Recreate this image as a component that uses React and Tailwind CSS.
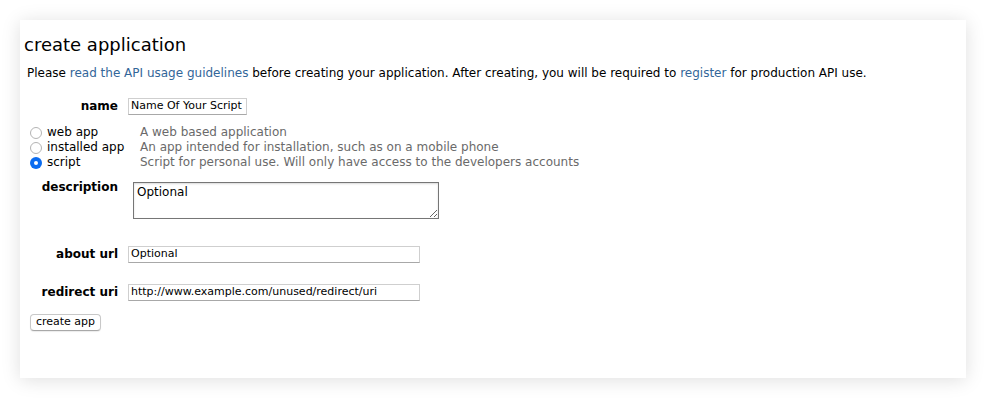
export default function App() {
  const font = { fontFamily: '"DejaVu Sans", Verdana, sans-serif' };
  const Radio = ({ checked }) =>
    checked ? (
      <span className="inline-flex h-[12px] w-[12px] items-center justify-center rounded-full bg-[#0b6cf0]">
        <span className="h-[4px] w-[4px] rounded-full bg-white" />
      </span>
    ) : (
      <span className="inline-block h-[12px] w-[12px] rounded-full border border-[#b4b4b4] bg-white" />
    );
  return (
    <div className="h-[398px] w-[986px] bg-white pt-[20px] pl-[20px]" style={font}>
      <div className="h-[358px] w-[946px] bg-white shadow-[0_2px_18px_rgba(0,0,0,0.13)] pl-[4px] pt-[13px] text-black">
        <h2 className="text-[18px] leading-[24px]">create application</h2>
        <p className="mt-[8px] pl-[3px] text-[12px] leading-[16px]">
          Please <span className="text-[#336699]">read the API usage guidelines</span> before creating your application. After creating, you will be required to <span className="text-[#336699]">register</span> for production API use.
        </p>
        <div className="mt-[16px] flex items-center text-[12px]">
          <div className="w-[94px] text-right font-bold">name</div>
          <div className="ml-[10px] flex h-[17px] w-[119px] items-center border border-[#cfcfcf] border-b-[#a8a8a8] px-[2px] text-[11px]">
            Name Of Your Script
          </div>
        </div>
        <div className="mt-[10px] flex flex-col pl-[6px] text-[12px] leading-[15px]">
          {[
            ["web app", "A web based application", false],
            ["installed app", "An app intended for installation, such as on a mobile phone", false],
            ["script", "Script for personal use. Will only have access to the developers accounts", true],
          ].map(([a, b, c]) => (
            <div key={a} className="flex items-center">
              <Radio checked={c} />
              <span className="ml-[5px] w-[93px]">{a}</span>
              <span className="text-[#6a6a6a]">{b}</span>
            </div>
          ))}
        </div>
        <div className="mt-[12px] flex items-start text-[12px]">
          <div className="-mt-[2px] w-[94px] text-right font-bold leading-[14px]">description</div>
          <textarea
            defaultValue="Optional"
            className="ml-[15px] h-[37px] w-[306px] border border-[#767676] px-[3px] pt-[2px] text-[12px] leading-[15px] shadow-[inset_0_1px_2px_rgba(0,0,0,0.15)] outline-none"
            style={font}
          />
        </div>
        <div className="mt-[26px] flex items-center text-[12px]">
          <div className="w-[94px] text-right font-bold">about url</div>
          <div className="ml-[10px] flex h-[17px] w-[292px] items-center border border-[#cfcfcf] border-b-[#a8a8a8] px-[2px] text-[11px]">
            Optional
          </div>
        </div>
        <div className="mt-[20px] flex items-center text-[12px]">
          <div className="w-[94px] text-right font-bold">redirect uri</div>
          <div className="ml-[10px] flex h-[17px] w-[292px] items-center border border-[#cfcfcf] border-b-[#a8a8a8] px-[2px] text-[11px]">
            http://www.example.com/unused/redirect/uri
          </div>
        </div>
        <div className="mt-[13px] pl-[6px]">
          <button className="flex h-[17px] w-[71px] items-center justify-center rounded-[4px] border border-[#c8c8c8] border-b-[#a8a8a8] bg-white text-[11px] shadow-[0_1px_1px_rgba(0,0,0,0.08)]">
            create app
          </button>
        </div>
      </div>
    </div>
  );
}
